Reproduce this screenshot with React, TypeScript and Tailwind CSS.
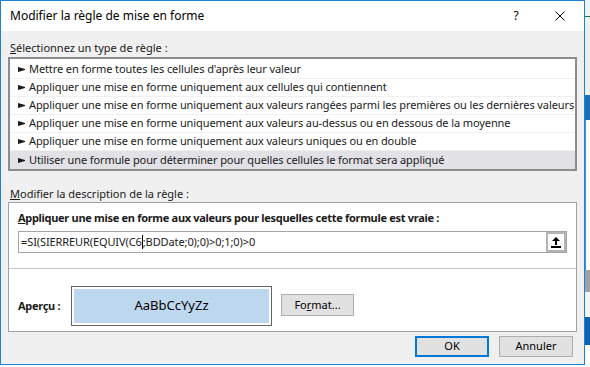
import React from 'react';

const ruleTypes = [
  "Mettre en forme toutes les cellules d'après leur valeur",
  'Appliquer une mise en forme uniquement aux cellules qui contiennent',
  'Appliquer une mise en forme uniquement aux valeurs rangées parmi les premières ou les dernières valeurs',
  'Appliquer une mise en forme uniquement aux valeurs au-dessus ou en dessous de la moyenne',
  'Appliquer une mise en forme uniquement aux valeurs uniques ou en double',
  'Utiliser une formule pour déterminer pour quelles cellules le format sera appliqué',
];

function RuleArrow() {
  return (
    <svg width="7" height="5" viewBox="0 0 7 5" className="shrink-0">
      <polygon points="0,0 7,2 7,3 0,5" fill="#1a1a1a" />
    </svg>
  );
}

function CollapseIcon() {
  return (
    <svg width="10" height="11" viewBox="0 0 10 11">
      <polygon points="5,0 9,4 6,4 6,8 4,8 4,4 1,4" fill="#000" />
      <rect x="0" y="9" width="10" height="2" fill="#000" />
    </svg>
  );
}

export default function App() {
  return (
    <div className="w-[590px] h-[367px] flex bg-white overflow-hidden text-[11px] text-[#1a1a1a]" style={{ fontFamily: '"Noto Sans", sans-serif' }}>
      {/* Dialog */}
      <div className="w-[585px] h-[365px] shrink-0 flex flex-col border border-[#1883d7] bg-[#f0f0f0]">
        {/* Title bar */}
        <div className="h-[30px] bg-white flex items-center pl-[9px] shrink-0">
          <span className="flex-1 text-[12px] text-black">Modifier la règle de mise en forme</span>
          <span className="w-[20px] text-center text-[12px] text-black mr-[29px]">?</span>
          <svg width="10" height="10" viewBox="0 0 10 10" className="mr-[19px]">
            <path d="M0.5 0.5 L9.5 9.5 M9.5 0.5 L0.5 9.5" stroke="#000" strokeWidth="1" />
          </svg>
        </div>

        <div className="px-[7px] flex flex-col">
          <div className="h-[16px] mt-[9px] mb-[1px] pl-[2px] leading-[16px]">
            <span className="underline">S</span>électionnez un type de règle :
          </div>

          {/* Rule type list */}
          <div className="h-[114px] border-2 border-[#8c8c8c] bg-white pt-[2px] flex flex-col">
            {ruleTypes.map((label, i) => (
              <div
                key={i}
                className={`h-[18px] flex items-center gap-[4px] pl-[8px] border-b border-[#f0f0f0] ${
                  i === ruleTypes.length - 1 ? 'bg-[#e1e1e6] border-b-0' : ''
                }`}
              >
                <RuleArrow />
                <span className="whitespace-nowrap tracking-[-0.1px]">{label}</span>
              </div>
            ))}
          </div>

          <div className="h-[16px] mt-[15px] pl-[2px] leading-[16px]">
            <span className="underline">M</span>odifier la description de la règle :
          </div>

          {/* Description panel */}
          <div className="h-[130px] border border-[#a0a0a0] bg-white flex flex-col">
            <div className="px-[9px] pt-[7px]">
              <div className="h-[16px] leading-[16px] font-bold tracking-[-0.3px] whitespace-nowrap">
                <span className="underline">A</span>ppliquer une mise en forme aux valeurs pour lesquelles cette formule est vraie :
              </div>
              <div className="mt-[5px] h-[22px] border border-[#a5a5a5] flex items-center">
                <div className="flex-1 pl-[2px] whitespace-nowrap flex items-center tracking-[-0.1px]">
                  <span>=SI(SIERREUR(EQUIV(C6</span>
                  <span className="w-px h-[14px] bg-black" />
                  <span>;BDDate;0);0)&gt;0;1;0)&gt;0</span>
                </div>
                <div className="w-[20px] h-[20px] border-2 border-[#b4b4b4] bg-white flex items-center justify-center">
                  <CollapseIcon />
                </div>
              </div>
            </div>
            <div className="mt-[15px] border-t border-[#c8c8c8] flex-1 flex items-start pt-[17px] pl-[9px]">
              <span className="font-bold w-[53px] h-[40px] flex items-center tracking-[-0.3px]">Aperçu :</span>
              <div className="w-[201px] h-[40px] border border-[#646464] bg-white p-[2px]">
                <div className="h-full bg-[#bdd7ee] flex items-center justify-center text-[13px] text-black">
                  AaBbCcYyZz
                </div>
              </div>
              <button className="ml-[9px] mt-[8px] w-[73px] h-[22px] border border-[#adadad] bg-[#e1e1e1] text-black">
                Fo<span className="underline">r</span>mat...
              </button>
            </div>
          </div>

          {/* Footer buttons */}
          <div className="flex justify-end mt-[4px] pr-[4px] gap-[10px]">
            <button className="w-[74px] h-[21px] border-2 border-[#0078d7] bg-[#e1e1e1] text-black">OK</button>
            <button className="w-[74px] h-[21px] border border-[#adadad] bg-[#e1e1e1] text-black">Annuler</button>
          </div>
        </div>
      </div>

      {/* Spreadsheet behind the dialog */}
      <div className="flex-1 flex flex-col">
        <div className="h-[16px] bg-[#f3f3f3]" />
        <div className="h-px bg-[#217346]" />
        <div className="h-[78px] bg-[#f0f0f0]" />
        <div className="h-[25px] bg-[#1e6cb8]" />
        <div className="h-[150px] bg-white border-l border-[#4a90d9]" />
        <div className="h-[22px] bg-[#a0a0a0]" />
        <div className="h-[25px] bg-[#f5f5f5]" />
        <div className="h-[28px] bg-[#0e63b0]" />
        <div className="flex-1 bg-white" />
      </div>
    </div>
  );
}
